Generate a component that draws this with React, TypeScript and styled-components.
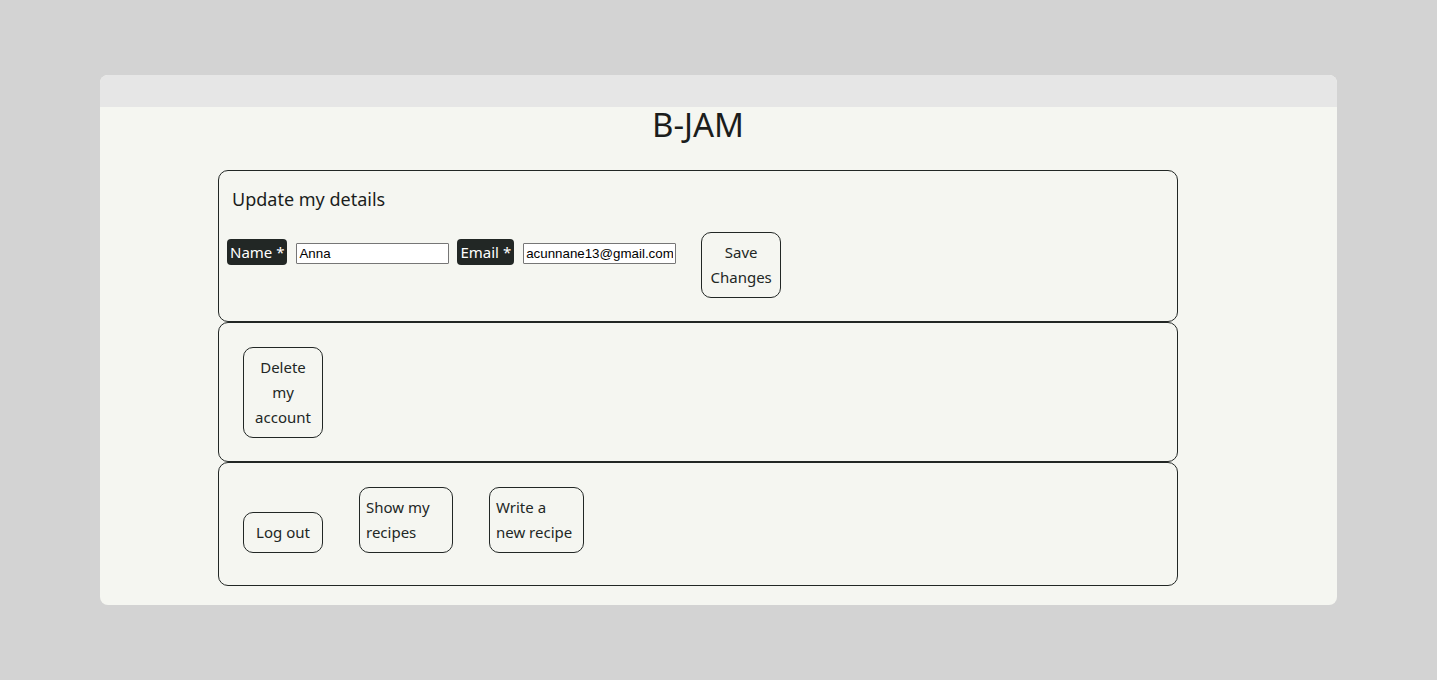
import styled, { createGlobalStyle } from "styled-components";

const GlobalStyle = createGlobalStyle`
    html, body {
        margin: 0;
        padding: 0;
        background: #d3d3d3;
    }
    body {
        font-family: "Noto Sans", sans-serif;
        color: #222725;
    }
`;

const Page = styled.div`
    height: 680px;
    display: flex;
    align-items: center;
    justify-content: center;
`;

const Window = styled.div`
    width: 1237px;
    height: 530px;
    background: #f5f6f1;
    border-radius: 8px;
    overflow: hidden;
    display: flex;
    flex-direction: column;
`;

const TopBar = styled.div`
    height: 32px;
    flex-shrink: 0;
    background: #e6e6e6;
`;

const Content = styled.main`
    width: 960px;
    margin-left: 118px;
    display: flex;
    flex-direction: column;
`;

const Title = styled.h1`
    margin: 0;
    height: 63px;
    font-family: "Noto Sans", sans-serif;
    font-weight: 400;
    font-size: 33px;
    line-height: 36px;
    text-align: center;
    color: #1b1d1c;
`;

const Card = styled.section<{ $pad: string }>`
    box-sizing: border-box;
    border: 1px solid #222725;
    border-radius: 10px;
    padding: ${p => p.$pad};
`;

const CardTitle = styled.h2`
    margin: 0 0 22px 5px;
    font-family: "Noto Sans", sans-serif;
    font-weight: 400;
    font-size: 18px;
    line-height: 22px;
    color: #1b1d1c;
`;

const FormRow = styled.form`
    display: flex;
    align-items: baseline;
`;

const Label = styled.label`
    background: #222725;
    color: #ffffff;
    font-size: 15px;
    line-height: 26px;
    padding: 0 3px;
    border-radius: 4px;
    margin-right: 9px;
`;

const Input = styled.input`
    box-sizing: border-box;
    width: 153px;
    height: 21px;
    padding: 1px 2px;
    font-family: "Liberation Sans", Arial, sans-serif;
    font-size: 13.33px;
    color: #000;
    background: #fff;
    border: 1px solid #767676;
    border-radius: 1px;
    margin-right: 8px;
`;

const ButtonRow = styled.div`
    display: flex;
    align-items: flex-end;
    gap: 36px;
`;

const Button = styled.button<{ $width: number; $align?: string }>`
    box-sizing: border-box;
    width: ${p => p.$width}px;
    padding: 7px 6px;
    background: transparent;
    border: 1px solid #222725;
    border-radius: 10px;
    font-family: "Noto Sans", sans-serif;
    font-size: 15px;
    line-height: 25px;
    color: #222725;
    text-align: ${p => p.$align || "center"};
    cursor: pointer;
`;

const SaveButton = styled(Button)`
    margin-left: 17px;
`;

export default function App() {
    return <>
        <GlobalStyle />
        <Page>
            <Window>
                <TopBar />
                <Content>
                    <Title>B-JAM</Title>

                    <Card $pad="17px 0 23px 8px">
                        <CardTitle>Update my details</CardTitle>
                        <FormRow onSubmit={e => e.preventDefault()}>
                            <Label htmlFor="name">Name *</Label>
                            <Input id="name" defaultValue="Anna" />
                            <Label htmlFor="email">Email *</Label>
                            <Input id="email" defaultValue="acunnane13@gmail.com" />
                            <SaveButton $width={80}>Save<br />Changes</SaveButton>
                        </FormRow>
                    </Card>

                    <Card $pad="24px 24px 23px 24px">
                        <Button $width={80}>Delete<br />my<br />account</Button>
                    </Card>

                    <Card $pad="24px 24px 32px 24px">
                        <ButtonRow>
                            <Button $width={80}>Log out</Button>
                            <Button $width={94} $align="left">Show my<br />recipes</Button>
                            <Button $width={95} $align="left">Write a<br />new recipe</Button>
                        </ButtonRow>
                    </Card>
                </Content>
            </Window>
        </Page>
    </>;
}
